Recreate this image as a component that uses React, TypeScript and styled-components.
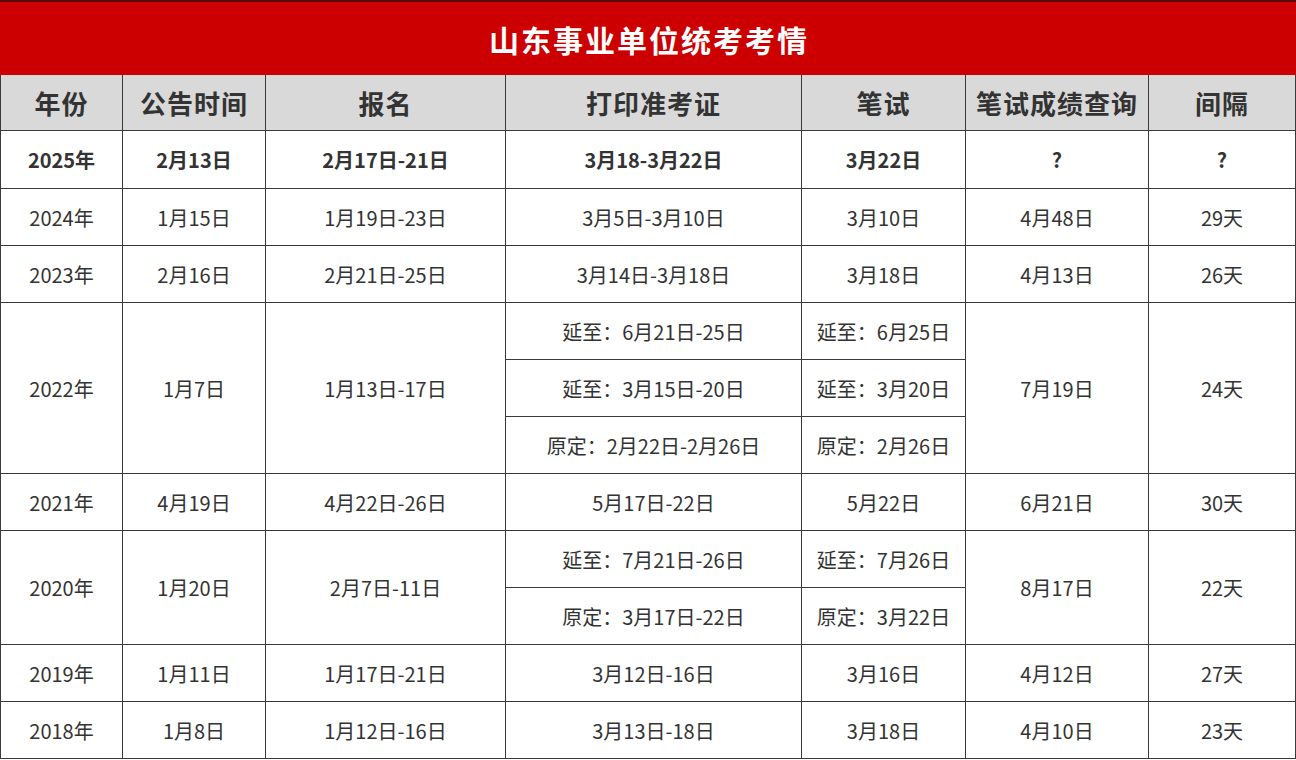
import React from "react";
import styled, { createGlobalStyle } from "styled-components";

const GlobalStyle = createGlobalStyle`
  html, body {
    margin: 0;
    padding: 0;
    background: #ffffff;
  }
  body {
    font-family: "Noto Sans CJK SC", "Noto Sans", sans-serif;
  }
`;

interface YearRecord {
  year: string;
  notice: string;
  signup: string;
  ticket: string[];
  exam: string[];
  score: string;
  gap: string;
  bold?: boolean;
}

const records: YearRecord[] = [
  {
    year: "2025年",
    notice: "2月13日",
    signup: "2月17日-21日",
    ticket: ["3月18-3月22日"],
    exam: ["3月22日"],
    score: "?",
    gap: "?",
    bold: true,
  },
  {
    year: "2024年",
    notice: "1月15日",
    signup: "1月19日-23日",
    ticket: ["3月5日-3月10日"],
    exam: ["3月10日"],
    score: "4月48日",
    gap: "29天",
  },
  {
    year: "2023年",
    notice: "2月16日",
    signup: "2月21日-25日",
    ticket: ["3月14日-3月18日"],
    exam: ["3月18日"],
    score: "4月13日",
    gap: "26天",
  },
  {
    year: "2022年",
    notice: "1月7日",
    signup: "1月13日-17日",
    ticket: ["延至：6月21日-25日", "延至：3月15日-20日", "原定：2月22日-2月26日"],
    exam: ["延至：6月25日", "延至：3月20日", "原定：2月26日"],
    score: "7月19日",
    gap: "24天",
  },
  {
    year: "2021年",
    notice: "4月19日",
    signup: "4月22日-26日",
    ticket: ["5月17日-22日"],
    exam: ["5月22日"],
    score: "6月21日",
    gap: "30天",
  },
  {
    year: "2020年",
    notice: "1月20日",
    signup: "2月7日-11日",
    ticket: ["延至：7月21日-26日", "原定：3月17日-22日"],
    exam: ["延至：7月26日", "原定：3月22日"],
    score: "8月17日",
    gap: "22天",
  },
  {
    year: "2019年",
    notice: "1月11日",
    signup: "1月17日-21日",
    ticket: ["3月12日-16日"],
    exam: ["3月16日"],
    score: "4月12日",
    gap: "27天",
  },
  {
    year: "2018年",
    notice: "1月8日",
    signup: "1月12日-16日",
    ticket: ["3月13日-18日"],
    exam: ["3月18日"],
    score: "4月10日",
    gap: "23天",
  },
];

const headers = ["年份", "公告时间", "报名", "打印准考证", "笔试", "笔试成绩查询", "间隔"];

const Page = styled.div`
  width: 1296px;
  height: 760px;
  overflow: hidden;
  background: #ffffff;
`;

const TitleBar = styled.div`
  height: 75px;
  box-sizing: border-box;
  border-top: 2px solid #5c0a0a;
  background: #cc0000;
  color: #ffffff;
  display: flex;
  align-items: center;
  justify-content: center;
  font-size: 30px;
  font-weight: 700;
  letter-spacing: 2px;
  text-indent: 2px;
`;

const Grid = styled.div`
  display: grid;
  grid-template-columns: 122px 143px 240px 296px 164px 183px 1fr;
  grid-template-rows: 56px 58px repeat(10, 57px);
  border-left: 1.5px solid #3a3a3a;
  color: #333333;
`;

const Cell = styled.div<{ $row: number; $col: number; $span?: number; $bold?: boolean }>`
  grid-row: ${(p) => p.$row} / span ${(p) => p.$span ?? 1};
  grid-column: ${(p) => p.$col};
  box-sizing: border-box;
  border-right: 1.5px solid #3a3a3a;
  border-bottom: 1.5px solid #3a3a3a;
  display: flex;
  align-items: center;
  justify-content: center;
  font-size: 20px;
  font-weight: ${(p) => (p.$bold ? 700 : 400)};
  white-space: nowrap;
`;

const HeadCell = styled(Cell)`
  background: #d9d9d9;
  font-size: 26px;
  font-weight: 700;
  color: #333333;
  letter-spacing: 1px;
`;

export default function App() {
  const cells: React.ReactNode[] = [];
  let row = 2;
  records.forEach((r) => {
    const span = r.ticket.length;
    const b = r.bold;
    cells.push(
      <Cell key={`${r.year}-y`} $row={row} $col={1} $span={span} $bold={b}>{r.year}</Cell>,
      <Cell key={`${r.year}-n`} $row={row} $col={2} $span={span} $bold={b}>{r.notice}</Cell>,
      <Cell key={`${r.year}-s`} $row={row} $col={3} $span={span} $bold={b}>{r.signup}</Cell>
    );
    r.ticket.forEach((t, i) => {
      cells.push(
        <Cell key={`${r.year}-t${i}`} $row={row + i} $col={4} $bold={b}>{t}</Cell>,
        <Cell key={`${r.year}-e${i}`} $row={row + i} $col={5} $bold={b}>{r.exam[i]}</Cell>
      );
    });
    cells.push(
      <Cell key={`${r.year}-c`} $row={row} $col={6} $span={span} $bold={b}>{r.score}</Cell>,
      <Cell key={`${r.year}-g`} $row={row} $col={7} $span={span} $bold={b}>{r.gap}</Cell>
    );
    row += span;
  });

  return (
    <Page>
      <GlobalStyle />
      <TitleBar>山东事业单位统考考情</TitleBar>
      <Grid>
        {headers.map((h, i) => (
          <HeadCell key={h} $row={1} $col={i + 1}>{h}</HeadCell>
        ))}
        {cells}
      </Grid>
    </Page>
  );
}
